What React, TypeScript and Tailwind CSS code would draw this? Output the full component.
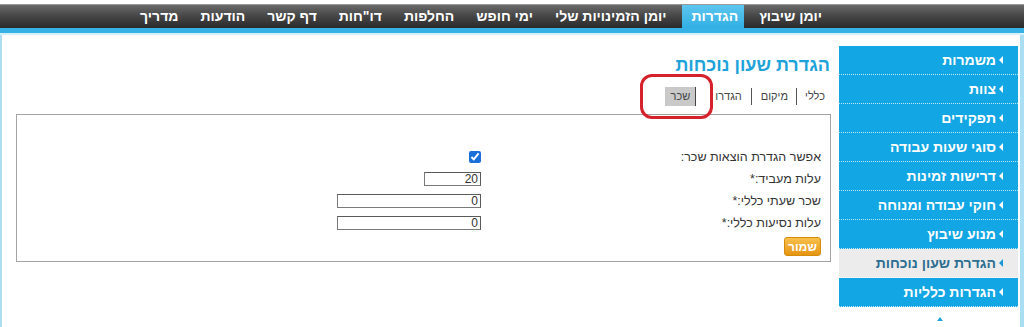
const navItems = ['יומן שיבוץ', 'הגדרות', 'יומן הזמינויות שלי', 'ימי חופש', 'החלפות', 'דו"חות', 'דף קשר', 'הודעות', 'מדריך']

const sideItems = [
    'משמרות',
    'צוות',
    'תפקידים',
    'סוגי שעות עבודה',
    'דרישות זמינות',
    'חוקי עבודה ומנוחה',
    'מנוע שיבוץ',
    'הגדרת שעון נוכחות',
    'הגדרות כלליות',
]

function TopNav() {
    return (
        <nav className="flex h-[24px] items-stretch bg-gradient-to-b from-[#6a6a6a] via-[#454545] to-[#2a2a2a] border-t border-[#9a9a9a] pr-[191px]">
            {navItems.map((label) => {
                const active = label === 'הגדרות'
                return (
                    <a
                        key={label}
                        className={
                            active
                                ? 'flex items-center pl-[10px] pr-[6px] mx-[4px] bg-gradient-to-b from-[#5cc6ef] to-[#30afe4] text-white text-[14px] font-bold'
                                : 'flex items-center px-[11px] text-white text-[14px] font-bold'
                        }
                    >
                        {label}
                    </a>
                )
            })}
        </nav>
    )
}

function Sidebar() {
    return (
        <aside className="mt-[11px] w-[179px] shrink-0">
            {sideItems.map((label) => {
                const active = label === 'הגדרת שעון נוכחות'
                return (
                    <div
                        key={label}
                        className={
                            active
                                ? 'flex h-[29px] items-center gap-[3px] pr-[15px] bg-[#ececec] border-b border-dotted border-white'
                                : 'flex h-[29px] items-center gap-[3px] pr-[15px] bg-[#12a6e4] border-b border-dotted border-[#bfe6f8]'
                        }
                    >
                        <span
                            className={
                                active
                                    ? 'h-0 w-0 border-y-[4px] border-y-transparent border-r-[4px] border-r-[#1b98d3]'
                                    : 'h-0 w-0 border-y-[4px] border-y-transparent border-r-[4px] border-r-white'
                            }
                        />
                        <span className={active ? 'text-[14px] font-bold text-[#2d6e91]' : 'text-[14px] font-bold text-white'}>
                            {label}
                        </span>
                    </div>
                )
            })}
            <div className="flex justify-center pt-[10px] pl-[22px]">
                <span className="h-0 w-0 border-x-[3px] border-x-transparent border-b-[4px] border-b-[#1ba3df]" />
            </div>
        </aside>
    )
}

function Tabs() {
    return (
        <div className="relative mt-[10px] flex h-[19px] items-center pr-[14px] text-[11px] text-[#444]">
            <span>כללי</span>
            <span className="mx-[8px] h-[17px] w-px bg-[#555]" />
            <span>מיקום</span>
            <span className="mx-[9px] h-[17px] w-px bg-[#555]" />
            <span>הגדרו</span>
            <span className="mr-[19px] flex h-[19px] w-[31px] items-center justify-center border-r border-[#444] bg-[#c9c9c9]">
                שכר
            </span>
            {/* annotation drawn on the screenshot */}
            <div className="pointer-events-none absolute left-[638px] top-[-13px] h-[45px] w-[73px] rounded-[12px] border-[3px] border-[#d4212b]" />
        </div>
    )
}

function Field({ label, children }: { label: string; children: React.ReactNode }) {
    return (
        <div className="flex h-[22px] items-center">
            <div className="w-[340px] shrink-0 text-[12.5px] text-[#333]">{label}</div>
            <div className="flex items-center">{children}</div>
        </div>
    )
}

const inputCls = 'h-[14px] border border-[#7a7a7a] border-t-[#5a5a5a] border-r-[#5a5a5a] px-[2px] text-right text-[12px] leading-[12px] text-[#333]'

function SalaryForm() {
    return (
        <div className="ml-[14px] mr-[8px] mt-[8px] h-[148px] border border-[#a3a3a3] pr-[9px] pt-[31px]">
            <Field label="אפשר הגדרת הוצאות שכר:">
                <input type="checkbox" defaultChecked className="m-0 h-[12px] w-[12px] accent-[#1b6fd8]" />
            </Field>
            <Field label="עלות מעביד:*">
                <input defaultValue="20" className={`w-[57px] ${inputCls}`} />
            </Field>
            <Field label="שכר שעתי כללי:*">
                <input defaultValue="0" className={`w-[144px] ${inputCls}`} />
            </Field>
            <Field label="עלות נסיעות כללי:*">
                <input defaultValue="0" className={`w-[144px] ${inputCls}`} />
            </Field>
            <button className="mt-[3px] flex h-[19px] w-[37px] items-center justify-center rounded-[3px] border border-[#d58b0c] bg-gradient-to-b from-[#f8c04a] to-[#e5950a] text-[12px] font-bold text-white">
                שמור
            </button>
        </div>
    )
}

export default function App() {
    return (
        <div dir="rtl" className="h-[327px] w-[1024px] overflow-hidden bg-white font-['Liberation_Sans',Arial,sans-serif]">
            <div className="h-[4px] bg-white" />
            <TopNav />
            <div className="h-[5px] bg-[#35b1e5]" />
            <div className="h-[2px] bg-[#d6f0fa]" />
            <div className="flex h-[292px] border-l-[2px] border-r-[4px] border-[#aadff3] pr-[2px]">
                <Sidebar />
                <main className="flex-1">
                    <h1 className="mt-[18px] h-[24px] pr-[9px] text-[18px] font-bold leading-[24px] text-[#1ea2da]">
                        הגדרת שעון נוכחות
                    </h1>
                    <Tabs />
                    <SalaryForm />
                </main>
            </div>
        </div>
    )
}
